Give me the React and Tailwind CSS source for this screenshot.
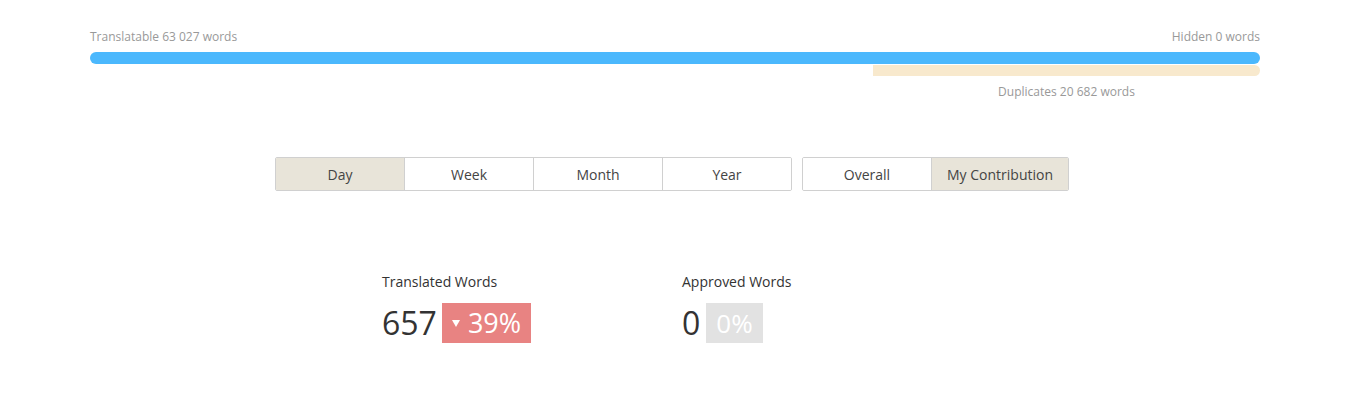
import React from "react";

const font = { fontFamily: '"Open Sans", "Noto Sans", sans-serif' };

function SegBtn({ label, active, width, first }) {
  return (
    <div
      className={`h-[32px] flex items-center justify-center text-[14px] text-[#444] ${first ? "" : "border-l border-[#d0d0d0]"} ${active ? "bg-[#e8e4d9]" : "bg-white"}`}
      style={{ width }}
    >
      {label}
    </div>
  );
}

export default function App() {
  return (
    <div className="w-[1349px] h-[400px] bg-white" style={font}>
      <div className="pl-[90px] pr-[89px] pt-[28px]">
        <div className="flex justify-between text-[12px] text-[#999] leading-[17px]">
          <span>Translatable 63 027 words</span>
          <span>Hidden 0 words</span>
        </div>
        <div className="mt-[7px] h-[12px] rounded-full bg-[#4bb8fd]" />
        <div className="flex justify-end">
          <div className="w-[387px]">
            <div className="mt-px h-[11px] rounded-r-full bg-[#f8e9cd]" />
            <div className="mt-[7px] text-center text-[12px] text-[#999] leading-[17px]">
              Duplicates 20 682 words
            </div>
          </div>
        </div>
      </div>

      <div className="mt-[57px] flex justify-center pr-[5px] gap-[10px]">
        <div className="flex border border-[#d0d0d0] rounded-[2px] overflow-hidden">
          <SegBtn label="Day" active width={128} first />
          <SegBtn label="Week" width={129} />
          <SegBtn label="Month" width={129} />
          <SegBtn label="Year" width={129} />
        </div>
        <div className="flex border border-[#d0d0d0] rounded-[2px] overflow-hidden">
          <SegBtn label="Overall" width={128} first />
          <SegBtn label="My Contribution" active width={137} />
        </div>
      </div>

      <div className="mt-[81px] flex pl-[382px]">
        <div className="w-[300px]">
          <div className="text-[14px] text-[#333] leading-[20px]">Translated Words</div>
          <div className="mt-[11px] flex items-center">
            <span className="text-[32px] leading-[40px] text-[#333]">657</span>
            <span className="ml-[5px] h-[40px] pl-[10px] pr-[10px] flex items-center bg-[#e88382] text-white text-[27px] leading-[40px]">
              <svg width="8" height="7" viewBox="0 0 8 7" className="mr-[8px] mt-[1px]">
                <path d="M0 0 H8 L4 7 Z" fill="#fff" />
              </svg>
              39%
            </span>
          </div>
        </div>
        <div className="w-[300px]">
          <div className="text-[14px] text-[#333] leading-[20px]">Approved Words</div>
          <div className="mt-[11px] flex items-center">
            <span className="text-[32px] leading-[40px] text-[#333]">0</span>
            <span className="ml-[6px] h-[40px] px-[10px] flex items-center bg-[#e2e2e2] text-white text-[26px] leading-[40px]">
              0%
            </span>
          </div>
        </div>
      </div>
    </div>
  );
}
